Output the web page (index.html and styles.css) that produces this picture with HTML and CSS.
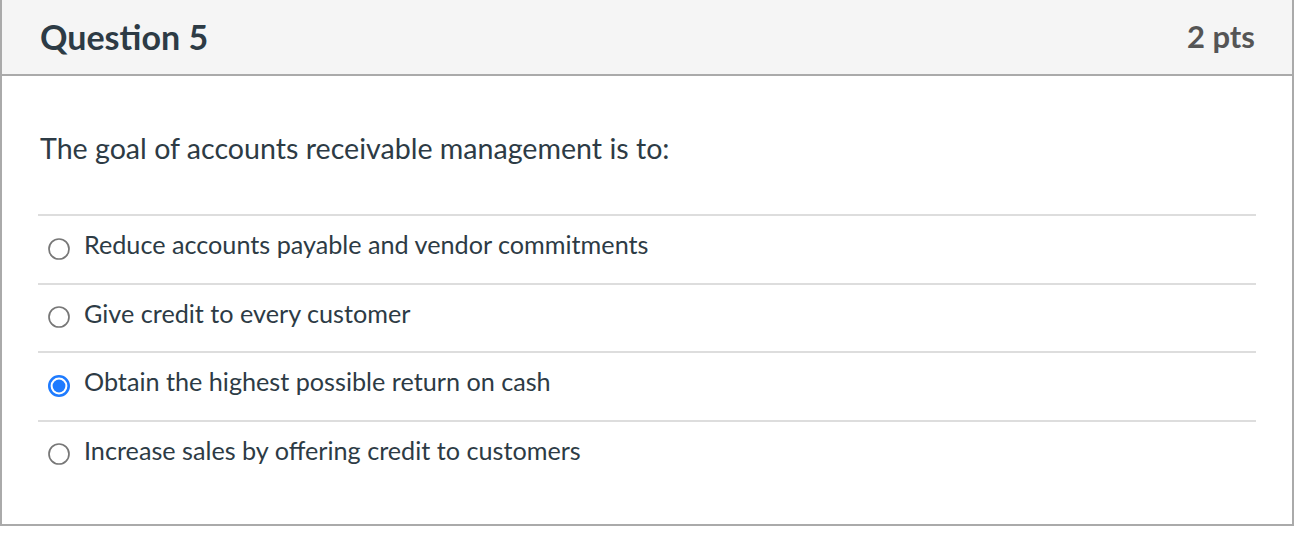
FILE: index.html
```html
<!DOCTYPE html>
<html>
<head>
<meta charset="utf-8">
<link rel="stylesheet" href="styles.css">
</head>
<body>
<div class="card">
  <div class="header">
    <div class="title">Question 5</div>
    <div class="pts">2 pts</div>
  </div>
  <div class="body">
    <div class="prompt">The goal of accounts receivable management is to:</div>
    <div class="answers">
      <label class="answer">
        <svg class="radio" width="22" height="22" viewBox="0 0 22 22"><circle cx="11" cy="11" r="10" fill="#fff" stroke="#777" stroke-width="1.7"/></svg>
        <span class="label">Reduce accounts payable and vendor commitments</span>
      </label>
      <label class="answer">
        <svg class="radio" width="22" height="22" viewBox="0 0 22 22"><circle cx="11" cy="11" r="10" fill="#fff" stroke="#777" stroke-width="1.7"/></svg>
        <span class="label">Give credit to every customer</span>
      </label>
      <label class="answer">
        <svg class="radio" width="22" height="22" viewBox="0 0 22 22"><circle cx="11" cy="11" r="9.7" fill="#fff" stroke="#1e7bff" stroke-width="2.6"/><circle cx="11" cy="11" r="6.4" fill="#1e7bff"/></svg>
        <span class="label">Obtain the highest possible return on cash</span>
      </label>
      <label class="answer">
        <svg class="radio" width="22" height="22" viewBox="0 0 22 22"><circle cx="11" cy="11" r="10" fill="#fff" stroke="#777" stroke-width="1.7"/></svg>
        <span class="label">Increase sales by offering credit to customers</span>
      </label>
    </div>
  </div>
</div>
</body>
</html>
```
FILE: styles.css
```css
html, body { margin: 0; padding: 0; background: #fff; }
body { font-family: Lato, "Liberation Sans", sans-serif; color: #2d3b45; }
.card {
  width: 1294px;
  height: 526px;
  box-sizing: border-box;
  border: 2px solid #aaaaaa;
  border-top: none;
}
.header {
  height: 76px;
  box-sizing: border-box;
  background: #f5f5f5;
  border-bottom: 2px solid #aaaaaa;
  display: flex;
  justify-content: space-between;
  align-items: center;
  padding: 0 37px 2px 38px;
}
.title { font-size: 34px; font-weight: 700; color: #2d3b45; }
.pts { font-size: 31px; font-weight: 700; color: #555555; }
.body { padding: 0 36px 0 36px; }
.prompt { font-size: 28.6px; padding-top: 54px; padding-left: 2px; height: 84px; line-height: 36px; }
.answers { border-top: 2px solid #dddddd; }
.answer {
  display: flex;
  align-items: flex-start;
  height: 53.5px;
  padding-top: 13px;
  border-bottom: 2px solid #dddddd;
  padding-left: 10px;
}
.answer:last-child { border-bottom: none; }
.radio { flex: none; display: block; margin-top: 8.5px; }
.label { font-size: 25.2px; line-height: 30px; margin-left: 14px; }
```
